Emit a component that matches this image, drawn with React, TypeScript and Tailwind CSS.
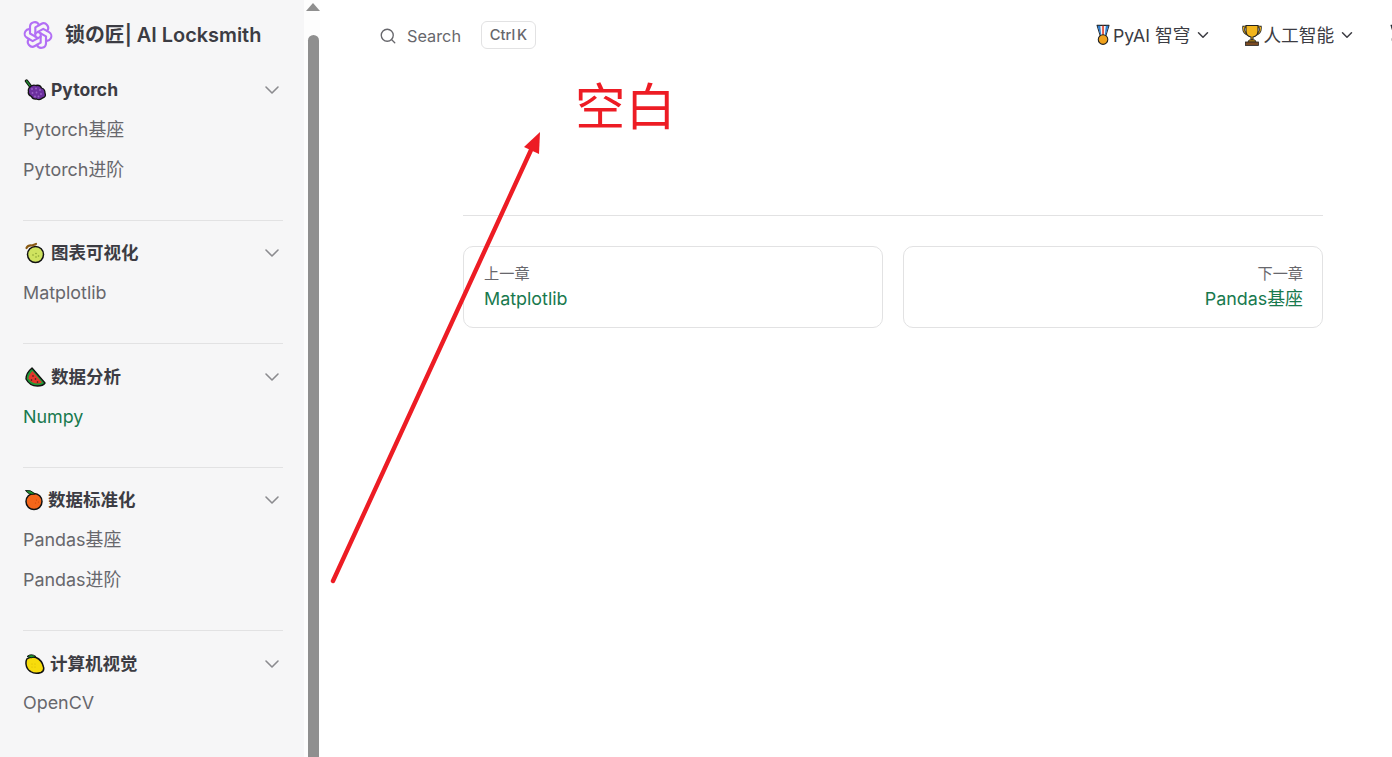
import { ChevronDown, Search } from "lucide-react";
import { TbBrandOpenai } from "react-icons/tb";
import type { ReactNode } from "react";

const Grape = () => (
  <svg viewBox="0 0 24 22" className="w-[24px] h-[22px] shrink-0">
    <path d="M3.5 2 L8 8" stroke="#111" strokeWidth="3.4" strokeLinecap="round" />
    <path d="M3.5 2 L8 8" stroke="#1f8a2e" strokeWidth="1.4" strokeLinecap="round" />
    <path d="M6 9 Q9 5 13 6.5 Q17 5.5 18.5 9 Q22 10 22 14 Q23.5 18 19.5 19 Q17 21.5 13.5 20 Q9.5 20.5 8.5 17.5 Q4.5 15.5 5.5 12.5 Q5 10.5 6 9Z" fill="#6c2f9e" stroke="#111" strokeWidth="1.3" />
    <g fill="#9a63c8">
      <circle cx="9" cy="10" r=".9" /><circle cx="13" cy="9.5" r=".9" /><circle cx="17" cy="11" r=".9" />
      <circle cx="9.5" cy="14" r=".9" /><circle cx="13.5" cy="13.5" r=".9" /><circle cx="18" cy="15" r=".9" />
      <circle cx="12" cy="17.5" r=".9" /><circle cx="15.5" cy="17.5" r=".9" />
    </g>
  </svg>
);
const Melon = () => (
  <svg viewBox="0 0 24 22" className="w-[24px] h-[22px] shrink-0">
    <circle cx="12.5" cy="12.5" r="8" fill="#cfe35f" stroke="#111" strokeWidth="1.5" />
    <path d="M3.5 6 Q5 3 9 3.5 L13 2" stroke="#8a5a14" strokeWidth="2.2" fill="none" strokeLinecap="round" />
    <g fill="#8aa332"><circle cx="10" cy="13" r=".8" /><circle cx="13" cy="11.5" r=".8" /><circle cx="13" cy="15" r=".8" /><circle cx="15.5" cy="14" r=".8" /></g>
  </svg>
);
const Watermelon = () => (
  <svg viewBox="0 0 24 22" className="w-[24px] h-[22px] shrink-0">
    <path d="M9 2 Q3 7 3 13 Q6.5 20 14.5 20 Q20 20 22 17 Z" fill="#1f9a37" stroke="#111" strokeWidth="1.4" strokeLinejoin="round" />
    <path d="M9.5 5 Q5.5 9 5.5 12.5 Q8.5 17.5 14.5 17.5 Q17 17.5 19 16.5 Z" fill="#e5352a" />
    <g fill="#222"><circle cx="10" cy="10" r=".8" /><circle cx="8.5" cy="14" r=".8" /><circle cx="12.5" cy="13" r=".8" /><circle cx="14.5" cy="16" r=".8" /></g>
  </svg>
);
const Orange = () => (
  <svg viewBox="0 0 21 22" className="w-[21px] h-[22px] shrink-0">
    <circle cx="11" cy="12.5" r="8" fill="#f4661a" stroke="#111" strokeWidth="1.5" />
    <path d="M2.5 1.5 Q8 0.5 12 5 Q6 6.5 2.5 1.5Z" fill="#1c9a30" stroke="#111" strokeWidth=".9" />
    <g fill="#c9480c"><circle cx="13.5" cy="11" r=".6" /><circle cx="15.5" cy="13" r=".6" /><circle cx="12.5" cy="14" r=".6" /></g>
  </svg>
);
const Lemon = () => (
  <svg viewBox="0 0 23 22" className="w-[23px] h-[22px] shrink-0">
    <path d="M3.8 6 Q8 3 13 4.5 Q19 7 20.5 14 Q21.5 18 18 19.5 Q12 21.5 7.5 18.5 Q3.5 16 3 11 Q2.8 8 3.8 6Z" fill="#f7dc0c" stroke="#111" strokeWidth="1.5" />
    <path d="M4 3.5 Q8 0 13 3.5 Q8 6 4 3.5Z" fill="#1c9a30" stroke="#111" strokeWidth=".9" />
    <g fill="#d9b70a"><circle cx="9" cy="11" r=".6" /><circle cx="12" cy="11" r=".6" /><circle cx="9" cy="14" r=".6" /><circle cx="12" cy="14" r=".6" /></g>
  </svg>
);
const Medal = () => (
  <svg viewBox="0 0 17 24" className="w-[17px] h-[22px] shrink-0">
    <path d="M1.5 1.5 H14.5 L11 13 H5Z" fill="#f4f4f4" stroke="#222" strokeWidth="1.2" strokeLinejoin="round" />
    <path d="M2 2 H5 L6 12 H5Z" fill="#2f7fd0" /><path d="M11 2 H14 L11 12 H10Z" fill="#2f7fd0" />
    <path d="M7 2 H9 V12 H7Z" fill="#e2533f" />
    <circle cx="8" cy="17" r="5.2" fill="#f0a21c" stroke="#222" strokeWidth="1.2" />
  </svg>
);
const Trophy = () => (
  <svg viewBox="0 0 20 22" className="w-[20px] h-[22px] shrink-0">
    <path d="M4 3 H1.5 Q1 9 6 10.5 M16 3 H18.5 Q19 9 14 10.5" fill="none" stroke="#222" strokeWidth="2.4" />
    <path d="M4 3 H1.5 Q1 9 6 10.5 M16 3 H18.5 Q19 9 14 10.5" fill="none" stroke="#f2b51d" strokeWidth="1" />
    <path d="M4 1.5 H16 V7 Q16 12 11 13 V16 H9 V13 Q4 12 4 7Z" fill="#f2b51d" stroke="#222" strokeWidth="1.1" />
    <path d="M7 16 H13 L14 18 H6Z" fill="#e0a012" stroke="#222" strokeWidth=".8" />
    <rect x="3.5" y="18" width="13" height="3.4" fill="#7a4a22" stroke="#222" strokeWidth=".8" />
  </svg>
);

type Section = { icon: ReactNode; title: string; items: string[]; active?: string };
const sections: Section[] = [
  { icon: <Grape />, title: "Pytorch", items: ["Pytorch基座", "Pytorch进阶"] },
  { icon: <Melon />, title: "图表可视化", items: ["Matplotlib"] },
  { icon: <Watermelon />, title: "数据分析", items: ["Numpy"], active: "Numpy" },
  { icon: <Orange />, title: "数据标准化", items: ["Pandas基座", "Pandas进阶"] },
  { icon: <Lemon />, title: "计算机视觉", items: ["OpenCV"] },
];

const font = "font-['Inter','Noto_Sans_CJK_SC',sans-serif]";

function NavItem({ icon, label }: { icon: ReactNode; label: string }) {
  return (
    <div className="flex items-center shrink-0 text-[17.7px] leading-none text-[#3c3c43]">
      {icon}
      <span className="ml-px pt-px">{label}</span>
      <ChevronDown className="ml-[4px] w-[18px] h-[18px]" strokeWidth={2} />
    </div>
  );
}

function PagerCard({ label, title, right }: { label: string; title: string; right?: boolean }) {
  return (
    <div className={`w-[420px] shrink-0 h-[82px] rounded-[10px] border border-[#e2e2e3] pl-[20px] pt-[15px] ${right ? "pr-[19px] text-right" : "pr-[20px]"}`}>
      <div className="text-[15.2px] leading-[24px] text-[#67676c]">{label}</div>
      <div className="text-[17.9px] leading-[25px] text-[#18794e]">{title}</div>
    </div>
  );
}

export default function App() {
  return (
    <div className={`relative flex h-screen w-full overflow-hidden bg-white ${font}`}>
      <aside className="w-[304px] shrink-0 bg-[#f6f6f7] pl-[23px] pr-[21px]">
        <div className="flex items-center h-[70px]">
          <TbBrandOpenai className="w-[32px] h-[32px] -ml-[1px] text-[#b26ff5]" strokeWidth={1.6} />
          <span className="ml-[11px] pt-[2px] text-[19.9px] font-semibold text-[#3c3c43] whitespace-nowrap">锁の匠| AI Locksmith</span>
        </div>
        {sections.map((s, i) => (
          <div key={s.title} className={i === 0 ? "" : "border-t border-[#e2e2e3] pt-[12.4px]"}>
            <div className="flex items-center justify-between h-[40px]">
              <div className="flex items-center gap-[4px]">
                {s.icon}
                <span className="pt-[0.3px] text-[17.5px] font-bold text-[#3c3c43]">{s.title}</span>
              </div>
              <ChevronDown className="w-[24px] h-[24px] -mr-[1px] text-[#8b8b8f]" strokeWidth={1.6} />
            </div>
            <div className="pb-[30px]">
              {s.items.map((it) => (
                <div key={it} className={`flex items-center h-[40px] pt-[0.4px] text-[17.9px] ${it === s.active ? "text-[#18794e]" : "text-[#67676c]"}`}>{it}</div>
              ))}
            </div>
          </div>
        ))}
      </aside>

      <div className="w-[16px] shrink-0 bg-[#fdfdfd] flex flex-col items-center pl-[2px]">
        <svg viewBox="0 0 14 8" className="w-[14px] h-[8px] mt-[3px] shrink-0"><path d="M7 0 L14 8 H0Z" fill="#8f8f8f" /></svg>
        <div className="w-[11px] flex-1 mt-[24px] rounded-t-[6px] bg-[#8f8f8f]" />
      </div>

      <main className="flex-1 min-w-0 overflow-hidden">
        <header className="flex items-center h-[70px] pl-[59px]">
          <div className="flex items-center shrink-0 text-[#67676c]">
            <div className="flex items-center pt-[2px]">
              <Search className="w-[18px] h-[18px]" strokeWidth={1.8} />
              <span className="ml-[10px] text-[16.3px] leading-[20px]">Search</span>
            </div>
            <span className="ml-[20px] h-[28px] w-[55px] flex items-center justify-center rounded-[6px] border border-[#e2e2e3] text-[14.7px] font-medium [word-spacing:-2px]">Ctrl K</span>
          </div>
          <div className="flex items-center shrink-0 ml-[559px] gap-[30px]">
            <NavItem icon={<Medal />} label="PyAI 智穹" />
            <NavItem icon={<Trophy />} label="人工智能" />
            <div className="ml-[3px]"><Medal /></div>
          </div>
        </header>
        <div className="w-[860px] ml-[143px] mt-[145px] border-t border-[#e2e2e3] pt-[30px] flex gap-[20px]">
          <PagerCard label="上一章" title="Matplotlib" />
          <PagerCard label="下一章" title="Pandas基座" right />
        </div>
      </main>

      <svg className="absolute left-0 top-0 w-[1392px] h-[757px] pointer-events-none" viewBox="0 0 1392 757">
        <path d="M333 581 L531 150" stroke="#ed1c24" strokeWidth="4.4" strokeLinecap="round" />
        <path d="M540 132 L524 147 L539 154Z" fill="#ed1c24" />
      </svg>
      <div className="absolute left-[575px] top-[72px] text-[50.4px] leading-[70px] text-[#ed1c24]">空白</div>
    </div>
  );
}
